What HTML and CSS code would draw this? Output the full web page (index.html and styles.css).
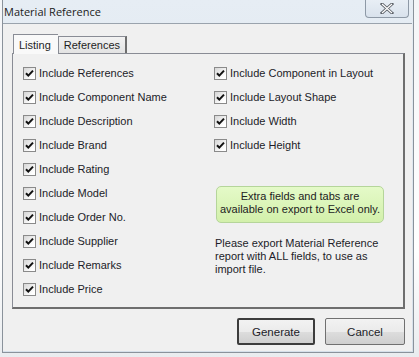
FILE: index.html
```html
<!DOCTYPE html>
<html>
<head>
    <title>Material Reference</title>
    <meta charset="UTF-8">
    <link rel="stylesheet" href="styles.css">
</head>
<body>
    <div class="window">
        <div class="titlebar">
            <span class="title">Material Reference</span>
            <span class="close">
                <svg width="14" height="11" viewBox="0 0 14 11">
                    <path d="M2 1 L12 10 M12 1 L2 10" stroke="#5a5f66" stroke-width="3" stroke-linecap="square"/>
                    <path d="M2 1 L12 10 M12 1 L2 10" stroke="#ffffff" stroke-width="1.2"/>
                </svg>
            </span>
        </div>
        <div class="client">
            <div class="tabs">
                <span class="tab active">Listing</span>
                <span class="tab">References</span>
            </div>
            <div class="panel">
                <div class="col">
                    <label class="check"><span class="box"></span>Include References</label>
                    <label class="check"><span class="box"></span>Include Component Name</label>
                    <label class="check"><span class="box"></span>Include Description</label>
                    <label class="check"><span class="box"></span>Include Brand</label>
                    <label class="check"><span class="box"></span>Include Rating</label>
                    <label class="check"><span class="box"></span>Include Model</label>
                    <label class="check"><span class="box"></span>Include Order No.</label>
                    <label class="check"><span class="box"></span>Include Supplier</label>
                    <label class="check"><span class="box"></span>Include Remarks</label>
                    <label class="check"><span class="box"></span>Include Price</label>
                </div>
                <div class="col">
                    <label class="check"><span class="box"></span>Include Component in Layout</label>
                    <label class="check"><span class="box"></span>Include Layout Shape</label>
                    <label class="check"><span class="box"></span>Include Width</label>
                    <label class="check"><span class="box"></span>Include Height</label>
                    <div class="note">Extra fields and tabs are<br>available on export to Excel only.</div>
                    <p class="hint">Please export Material Reference<br>report with ALL fields, to use as<br>import file.</p>
                </div>
            </div>
            <div class="buttons">
                <button class="btn default">Generate</button>
                <button class="btn">Cancel</button>
            </div>
        </div>
    </div>
</body>
</html>
```

FILE: styles.css
```css
body {
    margin: 0;
    width: 419px;
    height: 357px;
    background: linear-gradient(180deg, #f4f5f7 0%, #ffffff 70%, #e9ecef 100%);
    font-family: "Liberation Sans", Arial, sans-serif;
    overflow: hidden;
}
.window {
    margin-left: 2px;
    width: 410px;
    height: 352px;
    border: 1px solid #8a929b;
    border-top: none;
    background: linear-gradient(180deg, #e6edf4 0%, #d6e0ea 100%);
    display: flex;
    flex-direction: column;
}
.titlebar {
    height: 23px;
    display: flex;
    justify-content: space-between;
    align-items: flex-start;
}
.title {
    font-family: "Open Sans", "Noto Sans", sans-serif;
    font-size: 11px;
    color: #1b1b1b;
    padding: 4px 0 0 1px;
}
.close {
    width: 42px;
    height: 17px;
    margin-right: 4px;
    border: 1px solid #8e99a6;
    border-top: none;
    border-radius: 0 0 4px 4px;
    background: linear-gradient(180deg, #e8eef5 0%, #d9e2ec 100%);
    display: flex;
    align-items: center;
    justify-content: center;
}
.client {
    flex: 1;
    margin: 0 1px 1px 0;
    border-top: 1px solid #9aa3ad;
    background: #f0f0f0;
    padding: 9px 7px 0 9px;
}
.tabs {
    display: flex;
    align-items: flex-end;
    height: 20px;
    padding-left: 1px;
    position: relative;
    z-index: 1;
}
.tab {
    font-size: 11px;
    color: #1e1e1e;
    border: 1px solid #898c95;
    border-bottom: none;
    background: linear-gradient(180deg, #f2f2f2 0%, #e3e3e3 100%);
    height: 16px;
    line-height: 16px;
    padding: 0 5px;
}
.tab.active {
    background: #f9f9f9;
    height: 19px;
    line-height: 20px;
    margin-bottom: -1px;
    padding: 0 7px 0 5px;
    border-right: none;
}
.tab + .tab {
    border-right: 2px solid #6e6e6e;
}
.panel {
    height: 246px;
    border: 1px solid #898c95;
    border-right: 2px solid #6e6e6e;
    border-bottom: 2px solid #6e6e6e;
    background: #f0f0f0;
    padding: 7px 0 0 10px;
    display: grid;
    grid-template-columns: 191px 1fr;
}
.col {
    display: flex;
    flex-direction: column;
}
.check {
    display: flex;
    align-items: center;
    height: 24px;
    font-size: 11px;
    color: #1c1c28;
}
.box {
    width: 11px;
    height: 11px;
    border: 1px solid #8a8a8a;
    background-color: #f6f6f6;
    background-image: url("data:image/svg+xml,%3Csvg xmlns='http://www.w3.org/2000/svg' width='11' height='11'%3E%3Cpath d='M2 5.2 L4.3 7.6 L9 2.6' fill='none' stroke='%23111' stroke-width='2'/%3E%3C/svg%3E"), linear-gradient(135deg, #d6d6d6 0%, #ffffff 80%);
    margin-right: 3px;
}
.note {
    margin: 29px 0 0 2px;
    width: 166px;
    height: 32px;
    border: 1px solid #b5d59a;
    border-radius: 5px;
    background: linear-gradient(180deg, #e4fac8 0%, #d3f0ab 100%);
    font-size: 11px;
    line-height: 13px;
    color: #222;
    text-align: center;
    padding-top: 3px;
}
.hint {
    margin: 14px 0 0 1px;
    font-size: 11px;
    line-height: 13px;
    color: #1c1c28;
}
.buttons {
    display: flex;
    justify-content: flex-end;
    gap: 10px;
    padding: 9px 0 0 0;
}
.btn {
    width: 80px;
    height: 27px;
    font-family: "Liberation Sans", Arial, sans-serif;
    font-size: 11.5px;
    color: #1c1c28;
    border: 1px solid #707070;
    border-radius: 2px;
    background: linear-gradient(180deg, #f2f2f2 0%, #ebebeb 50%, #dddddd 51%, #cfcfcf 100%);
}
.btn.default {
    width: 78px;
    border: 2px solid #3c3c3c;
}
```
